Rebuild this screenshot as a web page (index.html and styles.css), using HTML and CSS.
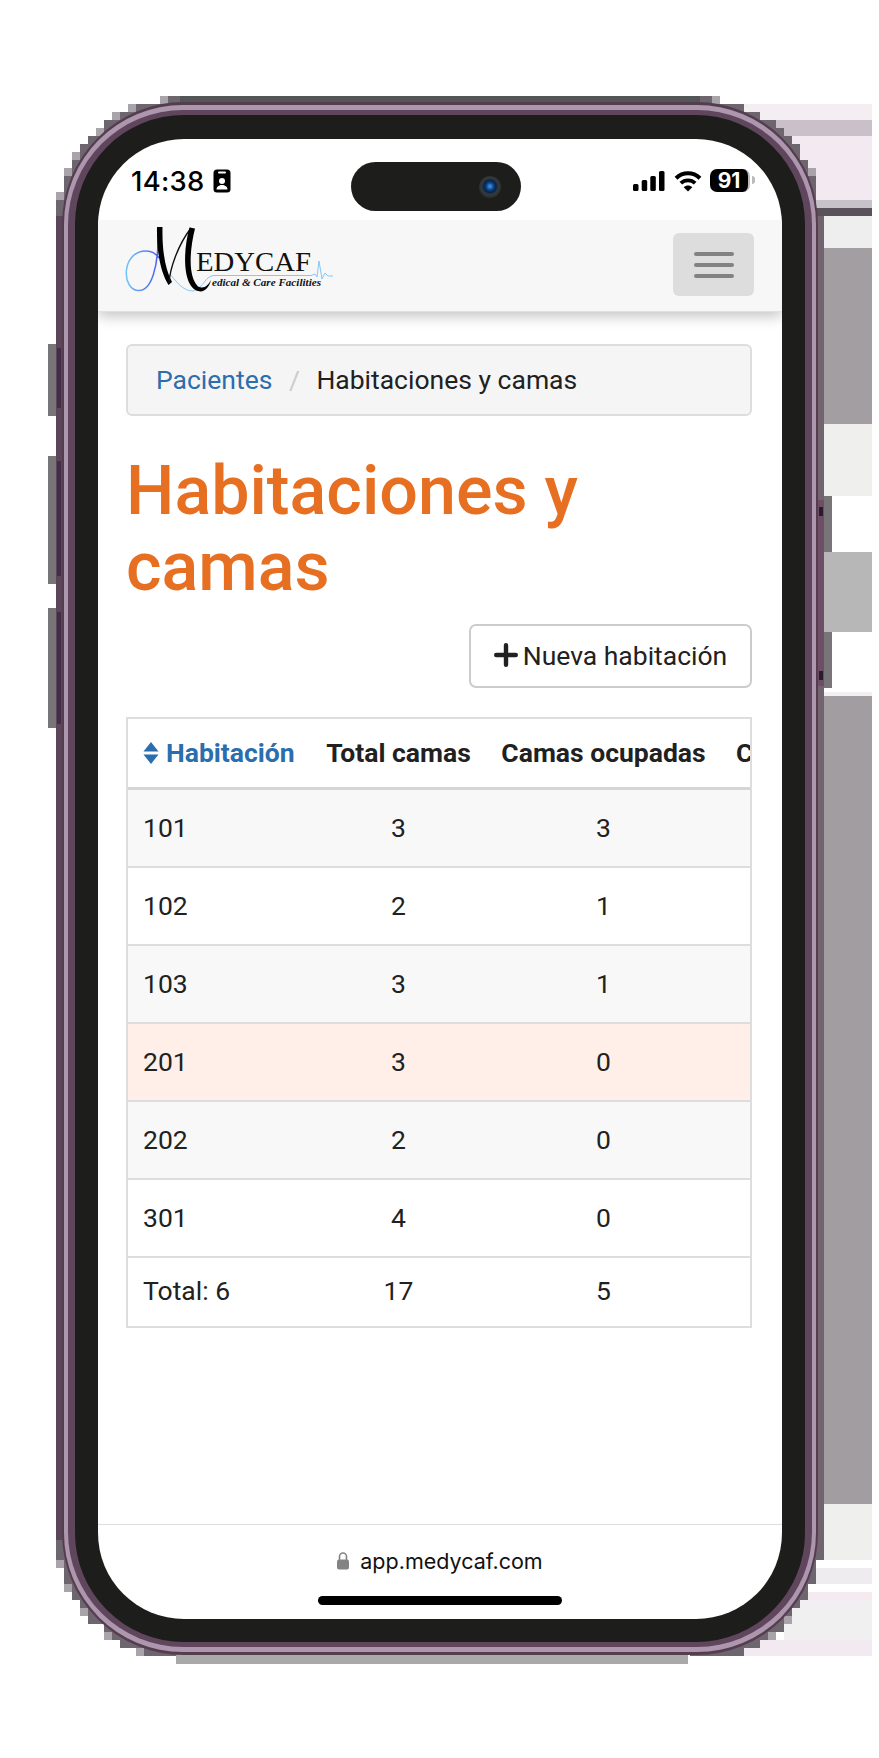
FILE: index.html
```html
<!DOCTYPE html>
<html lang="es">
<head>
<meta charset="utf-8">
<title>Habitaciones y camas</title>
<link rel="stylesheet" href="styles.css">
</head>
<body>
<div class="stage">
<svg class="backdrop" width="879" height="1758" viewBox="0 0 879 1758" shape-rendering="crispEdges">
  <!-- striped blocks to the right of the device -->
  <g>
    <rect x="744" y="104" width="128" height="16" fill="#f4edf2"/>
    <rect x="768" y="120" width="104" height="16" fill="#c9c0c9"/>
    <rect x="784" y="136" width="88" height="64" fill="#f3eaf1"/>
    <rect x="816" y="200" width="56" height="8" fill="#c7c2c9"/>
    <rect x="816" y="208" width="56" height="8" fill="#5a525a"/>
    <rect x="824" y="216" width="48" height="32" fill="#efeeee"/>
    <rect x="824" y="248" width="48" height="176" fill="#a39ea1"/>
    <rect x="824" y="424" width="48" height="72" fill="#efefee"/>
    <rect x="824" y="552" width="48" height="80" fill="#b8b7b8"/>
    <rect x="824" y="692" width="48" height="4" fill="#f1f1f1"/>
    <rect x="824" y="696" width="48" height="808" fill="#a29da0"/>
    <rect x="824" y="1504" width="48" height="56" fill="#efefee"/>
    <rect x="816" y="1568" width="56" height="16" fill="#eeecee"/>
    <rect x="808" y="1592" width="64" height="8" fill="#f4eaf0"/>
    <rect x="800" y="1600" width="72" height="8" fill="#f1eff1"/>
    <rect x="784" y="1608" width="88" height="32" fill="#f1f0f0"/>
    <rect x="744" y="1640" width="128" height="16" fill="#f3eaf1"/>
  </g>
  <rect x="168" y="96" width="544" height="10" fill="#535556"/>
  <rect x="176" y="1652" width="512" height="12" fill="#aaa9aa"/>
  <!-- stepped edge of each corner -->
  <g fill="#6d666f">
    <path d="M160 96V104H128V112H112V120H104V128H96V136H88V144H80V152H72V168H64V192H56V220H90L180 115V96z"/>
    <path d="M720 96V104H744V112H760V120H776V128H784V136H792V144H800V160H808V176H816V220H790L700 115V96z"/>
    <path d="M56 1535V1568H64V1592H72V1600H80V1616H88V1624H104V1640H120V1648H136V1656H176L190 1640L90 1535z"/>
    <path d="M824 1535V1560H816V1584H808V1600H800V1608H792V1624H784V1632H776V1640H760V1648H744V1656H690V1640L790 1535z"/>
  </g>
  <g fill="#a9a3aa">
    <rect x="160" y="96" width="8" height="8"/><rect x="128" y="104" width="8" height="8"/><rect x="112" y="112" width="8" height="8"/><rect x="96" y="128" width="8" height="8"/><rect x="72" y="152" width="8" height="8"/><rect x="64" y="168" width="8" height="8"/><rect x="56" y="192" width="8" height="8"/>
    <rect x="712" y="96" width="8" height="8"/><rect x="808" y="168" width="8" height="8"/>
    <rect x="56" y="1560" width="8" height="8"/><rect x="64" y="1584" width="8" height="8"/><rect x="80" y="1608" width="8" height="8"/><rect x="104" y="1632" width="8" height="8"/><rect x="136" y="1648" width="8" height="8"/>
    <rect x="784" y="1616" width="8" height="8"/><rect x="768" y="1632" width="8" height="8"/>
  </g>
  <!-- side rails and buttons -->
  <rect x="56" y="216" width="12" height="1324" fill="#5b4659"/>
  <rect x="816" y="216" width="8" height="1336" fill="#71646f"/>
  <g fill="#777577">
    <rect x="48" y="344" width="8" height="72"/><rect x="48" y="456" width="8" height="128"/><rect x="48" y="608" width="8" height="120"/>
    <rect x="824" y="496" width="8" height="56"/><rect x="824" y="632" width="8" height="56"/>
  </g>
  <g fill="#412d45">
    <rect x="57" y="348" width="4" height="60"/><rect x="57" y="461" width="4" height="115"/><rect x="57" y="612" width="4" height="112"/>
  </g>
  <rect x="818" y="500" width="6" height="186" fill="#6e4d66"/>
  <rect x="819" y="507" width="4" height="9" fill="#2a1c2d"/><rect x="819" y="671" width="4" height="9" fill="#2a1c2d"/>
</svg>

<div class="phone">
 <div class="rail"><div class="inner-rail"><div class="bezel">
  <div class="screen">
    <div class="status">
      <div class="clock"><span>14:38</span>
        <svg width="18" height="24" viewBox="0 0 18 24"><rect x="0.5" y="0.5" width="17" height="23" rx="3.5"/><rect x="5" y="2.5" width="8" height="2" rx="1" fill="#fff"/><circle cx="9" cy="12" r="3" fill="#fff"/><path d="M3.5 20.5c0-6 11-6 11 0z" fill="#fff"/></svg>
      </div>
      <div class="island"><span class="lens"></span></div>
      <div class="signals">
        <svg width="32" height="20" viewBox="0 0 32 20"><rect y="13" width="5.5" height="7" rx="1.5"/><rect x="8.7" y="9" width="5.5" height="11" rx="1.5"/><rect x="17.3" y="5" width="5.5" height="15" rx="1.5"/><rect x="26" width="5.5" height="20" rx="1.5"/></svg>
        <svg class="wifi" width="28" height="21" viewBox="0 0 28 21"><path d="M2 7.2C9 .7 19 .7 26 7.2" fill="none" stroke="#000" stroke-width="4"/><path d="M6.8 12.2c4.2-3.9 10.2-3.9 14.4 0" fill="none" stroke="#000" stroke-width="3.8"/><path d="M9.7 16.2c2.5-2.2 6.1-2.2 8.6 0L14 20.6z"/></svg>
        <div class="battery">91</div><span class="cap"></span>
      </div>
    </div>
    <header class="navbar">
      <svg class="logo" width="212" height="72" viewBox="0 0 212 72">
        <defs><linearGradient id="loop" x1="0" x2="1"><stop offset="0" stop-color="#6fc3f7"/><stop offset="1" stop-color="#4a5bee"/></linearGradient></defs>
        <path d="M33 14C33 40 27 65.500 14 65.500C-4 65.500-4 26 21 26C27 26 30 28 34 33" fill="none" stroke="url(#loop)" stroke-width="1.5"/>
        <path d="M45 49C53 59 59 66 68 66C79 63 80 50 90 50.500H186l4-1.500 2 3 2-16 3 18 3-6 3 3h5" fill="none" stroke="#83c8f8" stroke-width="1"/>
        <path d="M32 2h5.500C37 25 40 44 47 57l-3.500 3C35 46 31.500 25 32 2z"/>
        <path d="M44 58C45 43 53 20 66 3" fill="none" stroke="#111" stroke-width="1.400"/>
        <path d="M64.500 2.500l5.500 1C64 28 63.500 52 73 61.500c6 3 10-1 13-6.500-2 8-7 13-13 11C57 61 58 25 64.500 2.500z"/>
        <text class="logo-name" x="71" y="46" textLength="115" lengthAdjust="spacingAndGlyphs">EDYCAF</text>
        <text class="logo-tag" x="87" y="60.500" textLength="109" lengthAdjust="spacingAndGlyphs">edical &amp; Care Facilities</text>
      </svg>
      <button class="toggler" aria-label="Menú"><i></i><i></i><i></i></button>
    </header>
    <main class="content">
      <nav class="crumbs"><a>Pacientes</a><span class="slash">/</span><span>Habitaciones y camas</span></nav>
      <h1>Habitaciones y camas</h1>
      <div class="actions"><button class="add"><svg width="24" height="24" viewBox="0 0 24 24"><path d="M12 2.200v19.600M2.200 12h19.600" stroke="#212121" stroke-width="4.400" stroke-linecap="round"/></svg>Nueva habitación</button></div>
      <div class="table-wrap">
        <table>
          <thead><tr><th class="sorted"><svg width="16" height="22" viewBox="0 0 16 22"><path d="M8 0l7.500 9.500H.5zM8 22l7.500-9.500H.5z" fill="#2a6ead"/></svg>Habitación</th><th>Total camas</th><th>Camas ocupadas</th><th>Camas libres</th></tr></thead>
          <tbody>
            <tr><td>101</td><td>3</td><td>3</td><td></td></tr>
            <tr><td>102</td><td>2</td><td>1</td><td></td></tr>
            <tr><td>103</td><td>3</td><td>1</td><td></td></tr>
            <tr class="highlight"><td>201</td><td>3</td><td>0</td><td></td></tr>
            <tr><td>202</td><td>2</td><td>0</td><td></td></tr>
            <tr><td>301</td><td>4</td><td>0</td><td></td></tr>
          </tbody>
          <tfoot><tr><td>Total: 6</td><td>17</td><td>5</td><td></td></tr></tfoot>
        </table>
      </div>
    </main>
    <footer class="browser-bar">
      <div class="address"><svg width="12" height="18" viewBox="0 0 12 18"><rect y="7.500" width="12" height="10" rx="2" fill="#838383"/><path d="M2.500 8V4.500a3.500 3.500 0 0 1 7 0V8" fill="none" stroke="#838383" stroke-width="1.600"/></svg>app.medycaf.com</div>
      <div class="home"></div>
    </footer>
  </div>
 </div></div></div>
</div>
</div>
</body>
</html>
```
FILE: styles.css
```css
* { box-sizing: border-box; }
body { margin: 0; background: #fff; color: #212121; font-family: Roboto, "Liberation Sans", sans-serif; }
button { font: inherit; color: inherit; margin: 0; }
.stage { position: relative; width: 879px; height: 1758px; padding: 102px 61px 0 62px; overflow: hidden; }
.backdrop { position: absolute; left: 0; top: 0; }
.phone { position: relative; height: 1553px; padding: 3px 2px; background: #553d4f; border-radius: 122px; }
.rail { height: 100%; padding: 5px 4px; background: #ad97ae; border-radius: 119px; }
.inner-rail { height: 100%; padding: 5px 7px; background: #60465d; border-radius: 115px; }
.bezel { height: 100%; padding: 24px 23px; background: #1d1d1b; border-radius: 109px; }
.screen { height: 1480px; display: flex; flex-direction: column; overflow: hidden; background: #fff; border-radius: 86px; }
.status { flex: none; height: 81px; display: grid; grid-template-columns: 253px 170px 1fr; padding-top: 23px; }
.clock { display: flex; align-items: flex-start; padding-left: 33px; font: 500 27.4px/38px Inter, sans-serif; color: #000; letter-spacing: 0.3px; }
.clock svg { margin: 7px 0 0 8px; }
.island { height: 49px; border-radius: 25px; background: #1d1d1b; display: flex; justify-content: flex-end; padding: 14px 20px 0 0; }
.lens { width: 22px; height: 22px; border-radius: 50%; background: radial-gradient(circle at 50% 47%, #3584d0 0 8%, #0a4590 22%, #0c2340 38%, #333b42 52%, #2c2d2d 70%); }
.signals { display: flex; align-items: flex-start; padding: 9px 0 0 112px; }
.wifi { margin-left: 9px; }
.battery { width: 40px; height: 23px; margin: -2px 0 0 8px; border-right: 2px solid #bbb; border-radius: 7px; background: #000; color: #fff; font: 700 21px/23px Inter, sans-serif; text-align: center; }
.cap { width: 3px; height: 8px; margin: 5px 0 0 2px; background: #bbb; border-radius: 0 3px 3px 0; }
.navbar { position: relative; flex: none; height: 92px; display: flex; justify-content: space-between; padding: 5px 28px 0 27px; background: #f7f7f7; border-bottom: 1px solid #e1e1e1; box-shadow: 0 5px 12px rgba(0,0,0,.22); clip-path: inset(0 0 -30px 0); }
.logo-name { font: 27px "Liberation Serif", serif; fill: #111; }
.logo-tag { font: italic bold 10px "Liberation Serif", serif; fill: #111; }
.toggler { width: 81px; height: 63px; margin-top: 8px; padding: 0; border: 0; border-radius: 6px; background: #ddd; display: flex; flex-direction: column; align-items: center; justify-content: center; gap: 7px; }
.toggler i { width: 40px; height: 4px; border-radius: 2px; background: #828282; }
.content { flex: 1; padding: 32px 30px 0 28px; font-size: 26.5px; }
.crumbs { height: 72px; display: flex; align-items: center; padding: 0 0 2px 28px; border: 2px solid #ddd; border-radius: 6px; background: #f5f5f5; }
.crumbs a, .sorted { color: #2a6ead; }
.slash { width: 44px; text-align: center; color: #ccc; }
h1 { margin: 37px 0 0; font-size: 68.2px; line-height: 76px; font-weight: 500; color: #e66f21; }
.actions { display: flex; justify-content: flex-end; margin-top: 19px; }
.add { width: 283px; height: 64px; border: 2px solid #ccc; border-radius: 7px; background: #fff; display: flex; align-items: center; justify-content: center; gap: 5px; padding: 0 0 2px; white-space: nowrap; }
.table-wrap { height: 611px; margin-top: 29px; border: 2px solid #ddd; overflow: hidden; }
table { width: 750px; table-layout: fixed; border-collapse: separate; border-spacing: 0; }
th, td { padding: 0 0 2px; text-align: center; white-space: nowrap; }
th { height: 71px; width: 175px; font-weight: 700; border-bottom: 3px solid #d5d5d5; }
th:first-child { width: 183px; } th:nth-child(3) { width: 235px; }
th:last-child { text-align: left; padding-left: 15px; }
th:first-child, td:first-child { text-align: left; padding-left: 15px; }
.sorted svg { margin-right: 7px; vertical-align: -2px; }
td { height: 78px; border-bottom: 2px solid #ddd; }
tbody tr:nth-child(odd) { background: #f8f8f8; }
tbody tr.highlight { background: #ffefe8; }
tfoot td { height: 69px; border: 0; padding-bottom: 4px; }
.browser-bar { flex: none; height: 95px; border-top: 1px solid #ddd; display: flex; flex-direction: column; align-items: center; }
.address { display: flex; align-items: center; gap: 11px; height: 71px; font: 21.5px Inter, sans-serif; color: #111; }
.home { width: 244px; height: 9px; border-radius: 5px; background: #000; }
```
